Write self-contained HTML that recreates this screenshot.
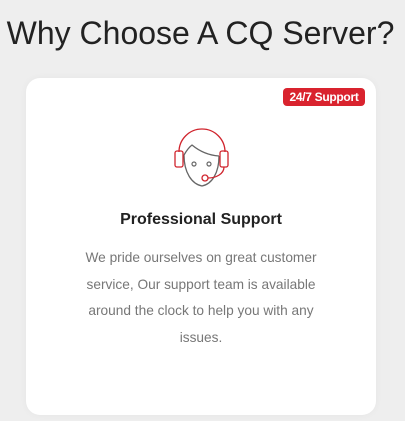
<!DOCTYPE html>
<html><head><style>
html,body{margin:0;padding:0;}
body{width:405px;height:421px;background:#eeeeee;font-family:"Liberation Sans",sans-serif;position:relative;overflow:hidden;}
h1{position:absolute;left:0;width:401px;top:15px;margin:0;text-align:center;font-weight:normal;font-size:32px;color:#222;}
.card{position:absolute;left:26px;top:78px;width:350px;height:337px;background:#fff;border-radius:14px;box-shadow:0 0 8px rgba(0,0,0,0.04);}
.badge{position:absolute;left:257px;top:10px;width:82px;height:18px;background:#d9232e;color:#fff;border-radius:4px;font-size:12px;font-weight:bold;text-align:center;line-height:18px;letter-spacing:-0.3px;}
svg{position:absolute;left:144px;top:46px;}
h2{position:absolute;top:133px;left:0;width:350px;margin:0;text-align:center;font-size:16px;font-weight:bold;color:#222;}
p{position:absolute;top:167px;left:52px;width:246px;margin:0;text-align:center;font-size:13.7px;line-height:26.5px;color:#777;}
</style></head><body>
<h1>Why Choose A CQ Server?</h1>
<div class="card">
<div class="badge">24/7 Support</div>
<svg width="64" height="68" viewBox="0 0 64 68" fill="none">
<path d="M9 28 A23 23 0 0 1 55 28" stroke="#d0242d" stroke-width="1.3"/>
<path d="M14 31 Q18 24 22 21 Q34 31 49 32 M14 31 C14 49 22 60 32 62 C42 60 49 49 49 32" stroke="#666" stroke-width="1.3" stroke-linejoin="round"/>
<rect x="5" y="27" width="8" height="16" rx="2" stroke="#d0242d" stroke-width="1.3"/>
<rect x="50" y="27" width="8" height="16" rx="2" stroke="#d0242d" stroke-width="1.3"/>
<circle cx="24" cy="40" r="2" stroke="#666" stroke-width="1.2"/>
<circle cx="39" cy="40" r="2" stroke="#666" stroke-width="1.2"/>
<path d="M54 43 C54 50 46 54 38 54" stroke="#d0242d" stroke-width="1.3"/>
<circle cx="35" cy="54" r="3" stroke="#d0242d" stroke-width="1.3"/>
</svg>
<h2>Professional Support</h2>
<p>We pride ourselves on great customer service, Our support team is available around the clock to help you with any issues.</p>
</div>
</body></html>
